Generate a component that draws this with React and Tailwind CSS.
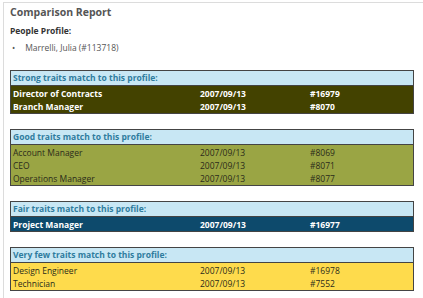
import React from 'react'

const groups = [
  {
    title: 'Strong traits match to this profile:',
    rowClass: 'bg-[#434200] text-white font-bold',
    rows: [
      ['Director of Contracts', '2007/09/13', '#16979'],
      ['Branch Manager', '2007/09/13', '#8070'],
    ],
  },
  {
    title: 'Good traits match to this profile:',
    rowClass: 'bg-[#9aa544] text-[#2b2b1a]',
    rows: [
      ['Account Manager', '2007/09/13', '#8069'],
      ['CEO', '2007/09/13', '#8071'],
      ['Operations Manager', '2007/09/13', '#8077'],
    ],
  },
  {
    title: 'Fair traits match to this profile:',
    rowClass: 'bg-[#0d4a6c] text-white font-bold',
    rows: [['Project Manager', '2007/09/13', '#16977']],
  },
  {
    title: 'Very few traits match to this profile:',
    rowClass: 'bg-[#fedb4c] text-[#2b2b1a]',
    rows: [
      ['Design Engineer', '2007/09/13', '#16978'],
      ['Technician', '2007/09/13', '#7552'],
    ],
  },
]

export default function App() {
  return (
    <div className="w-[423px] h-[298px] bg-white overflow-hidden" style={{ fontFamily: '"Open Sans", "DejaVu Sans", sans-serif' }}>
      <div className="ml-[3px] mt-[2px] border-l border-t border-[#dcdcdc] h-[296px] pl-[6px] pr-[6px] pt-[2px]">
        <h1 className="text-[10.5px] font-bold text-[#555] leading-[14px]">Comparison Report</h1>
        <p className="text-[8.5px] font-bold text-[#333] mt-[6px] leading-[12px]">People Profile:</p>
        <ul className="mt-[5px] mb-[16px] text-[8.5px] text-[#555] leading-[12px]">
          <li className="flex gap-[10px] pl-[2px]"><span>•</span><span>Marrelli, Julia (#113718)</span></li>
        </ul>

        <div className="flex flex-col gap-[15px]">
          {groups.map((g) => (
            <div key={g.title} className="border border-[#444] w-[404px]">
              <div className="bg-[#c8e7f4] text-[#2f7c9e] font-bold text-[8.5px] leading-[14px] px-[2px] border-b border-[#444]">
                {g.title}
              </div>
              <div className={`${g.rowClass} text-[8.5px] leading-[13px] py-[0.5px]`}>
                {g.rows.map((r) => (
                  <div key={r[0]} className="grid grid-cols-[187px_110px_1fr] px-[2px]">
                    <span>{r[0]}</span>
                    <span>{r[1]}</span>
                    <span>{r[2]}</span>
                  </div>
                ))}
              </div>
            </div>
          ))}
        </div>
      </div>
    </div>
  )
}
